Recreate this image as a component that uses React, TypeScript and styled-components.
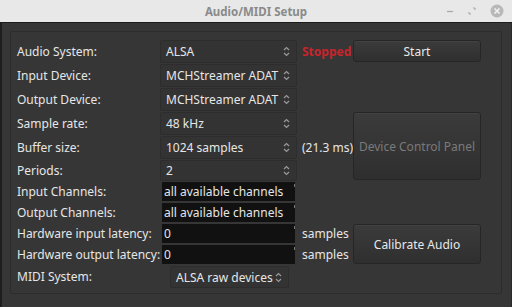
import React from "react";
import styled, { createGlobalStyle } from "styled-components";

const GlobalStyle = createGlobalStyle`
  html, body {
    margin: 0;
    padding: 0;
    background: #363636;
  }
  body {
    font-family: "Noto Sans", "Open Sans", sans-serif;
    font-size: 12px;
  }
`;

const Window = styled.div`
  width: 512px;
  height: 307px;
  display: flex;
  flex-direction: column;
  overflow: hidden;
`;

const TitleBar = styled.div`
  height: 22px;
  flex-shrink: 0;
  background: #e8e8e8;
  border-bottom: 1px solid #1b1b1b;
  display: flex;
  align-items: center;
  justify-content: center;
  position: relative;
  font-weight: bold;
  font-size: 11.5px;
  color: #8a8a8a;
`;

const WindowControls = styled.div`
  position: absolute;
  right: 8px;
  top: 0;
  height: 22px;
  display: flex;
  align-items: center;
  gap: 14px;
`;

const Body = styled.div`
  flex: 1;
  background: #363636;
  border-left: 2px solid #1e1e1e;
  border-right: 1px solid #2a2a2a;
  padding: 8px 9px 13px 8px;
  display: flex;
`;

const GroupBox = styled.div`
  flex: 1;
  border: 1px solid #2c2c2c;
  border-radius: 2px;
  padding: 7px 20px 0 6px;
`;

const Grid = styled.div`
  display: grid;
  grid-template-columns: 143px 138px 55px 128px;
  grid-template-rows: 24px 24px 24px 24px 24px 22px 21px 21px 21px 21px 23px;
  color: #e6e6e6;
`;

const Label = styled.div<{ $row: number }>`
  grid-column: 1;
  grid-row: ${(p) => p.$row};
  display: flex;
  align-items: center;
  white-space: nowrap;
`;

const Combo = styled.div<{ $row: number; $inset?: number }>`
  grid-column: 2;
  grid-row: ${(p) => p.$row};
  margin: 1px ${(p) => (p.$inset ? 9 : 1)}px 0 ${(p) => p.$inset ?? 0}px;
  background: #333333;
  border: 1px solid #2d2d2d;
  border-radius: 2px;
  display: flex;
  align-items: center;
  justify-content: space-between;
  padding: 0 6px 0 5px;
  white-space: nowrap;
`;

const Entry = styled.div<{ $row: number }>`
  grid-column: 2;
  grid-row: ${(p) => p.$row};
  margin: 1px 3px 1px 2px;
  background: #111111;
  display: flex;
  align-items: center;
  padding: 0 2px;
  white-space: nowrap;
  overflow: hidden;
  position: relative;
  &::after {
    content: "";
    position: absolute;
    right: 0;
    top: 2px;
    width: 1px;
    height: 3px;
    background: #777;
  }
`;

const Extra = styled.div<{ $row: number; $color?: string; $bold?: boolean }>`
  grid-column: 3;
  grid-row: ${(p) => p.$row};
  display: flex;
  align-items: center;
  padding-left: 4px;
  white-space: nowrap;
  color: ${(p) => p.$color ?? "#e6e6e6"};
  font-weight: ${(p) => (p.$bold ? "bold" : "normal")};
`;

const Button = styled.div<{ $rows: string; $disabled?: boolean }>`
  grid-column: 4;
  grid-row: ${(p) => p.$rows};
  margin: 1px 0;
  border: 1px solid #262626;
  border-radius: 3px;
  background: linear-gradient(#3b3b3b, #2f2f2f);
  box-shadow: inset 0 1px 0 rgba(255, 255, 255, 0.04);
  display: flex;
  align-items: center;
  justify-content: center;
  color: ${(p) => (p.$disabled ? "#7a7a7a" : "#e8e8e8")};
  white-space: nowrap;
`;

const UpDown = () => (
  <svg width="7" height="11" viewBox="0 0 7 11">
    <path d="M1 4 L3.5 1.5 L6 4 M1 7 L3.5 9.5 L6 7" fill="none" stroke="#9a9a9a" strokeWidth="1.2" />
  </svg>
);

const MinIcon = () => (
  <svg width="8" height="8" viewBox="0 0 8 8">
    <path d="M1 4.5 H7" stroke="#aaa" strokeWidth="1.3" />
  </svg>
);

const RestoreIcon = () => (
  <svg width="8" height="8" viewBox="0 0 8 8">
    <path d="M1 7 L3 7 M1 7 L1 5 M7 1 L5 1 M7 1 L7 3" stroke="#aaa" strokeWidth="1.2" fill="none" />
  </svg>
);

const CloseIcon = () => (
  <svg width="14" height="14" viewBox="0 0 14 14">
    <circle cx="7" cy="7" r="6.5" fill="#b8b8b8" />
    <path d="M4.5 4.5 L9.5 9.5 M9.5 4.5 L4.5 9.5" stroke="#f2f2f2" strokeWidth="1.6" />
  </svg>
);

const combos: [string, string][] = [
  ["Audio System:", "ALSA"],
  ["Input Device:", "MCHStreamer ADAT"],
  ["Output Device:", "MCHStreamer ADAT"],
  ["Sample rate:", "48 kHz"],
  ["Buffer size:", "1024 samples"],
  ["Periods:", "2"],
];

const entries: [string, string][] = [
  ["Input Channels:", "all available channels"],
  ["Output Channels:", "all available channels"],
  ["Hardware input latency:", "0"],
  ["Hardware output latency:", "0"],
];

export default function App() {
  return (
    <Window>
      <GlobalStyle />
      <TitleBar>
        Audio/MIDI Setup
        <WindowControls>
          <MinIcon />
          <RestoreIcon />
          <CloseIcon />
        </WindowControls>
      </TitleBar>
      <Body>
        <GroupBox>
          <Grid>
            {combos.map(([label, value], i) => (
              <React.Fragment key={label}>
                <Label $row={i + 1}>{label}</Label>
                <Combo $row={i + 1}>
                  <span>{value}</span>
                  <UpDown />
                </Combo>
              </React.Fragment>
            ))}
            {entries.map(([label, value], i) => (
              <React.Fragment key={label}>
                <Label $row={i + 7}>{label}</Label>
                <Entry $row={i + 7}>{value}</Entry>
              </React.Fragment>
            ))}
            <Label $row={11}>MIDI System:</Label>
            <Combo $row={11} $inset={10}>
              <span>ALSA raw devices</span>
              <UpDown />
            </Combo>

            <Extra $row={1} $color="#c9242b" $bold>
              Stopped
            </Extra>
            <Extra $row={5}>(21.3 ms)</Extra>
            <Extra $row={9}>samples</Extra>
            <Extra $row={10}>samples</Extra>

            <Button $rows="1">Start</Button>
            <Button $rows="4 / span 3" $disabled>
              Device Control Panel
            </Button>
            <Button $rows="9 / span 2">Calibrate Audio</Button>
          </Grid>
        </GroupBox>
      </Body>
    </Window>
  );
}
